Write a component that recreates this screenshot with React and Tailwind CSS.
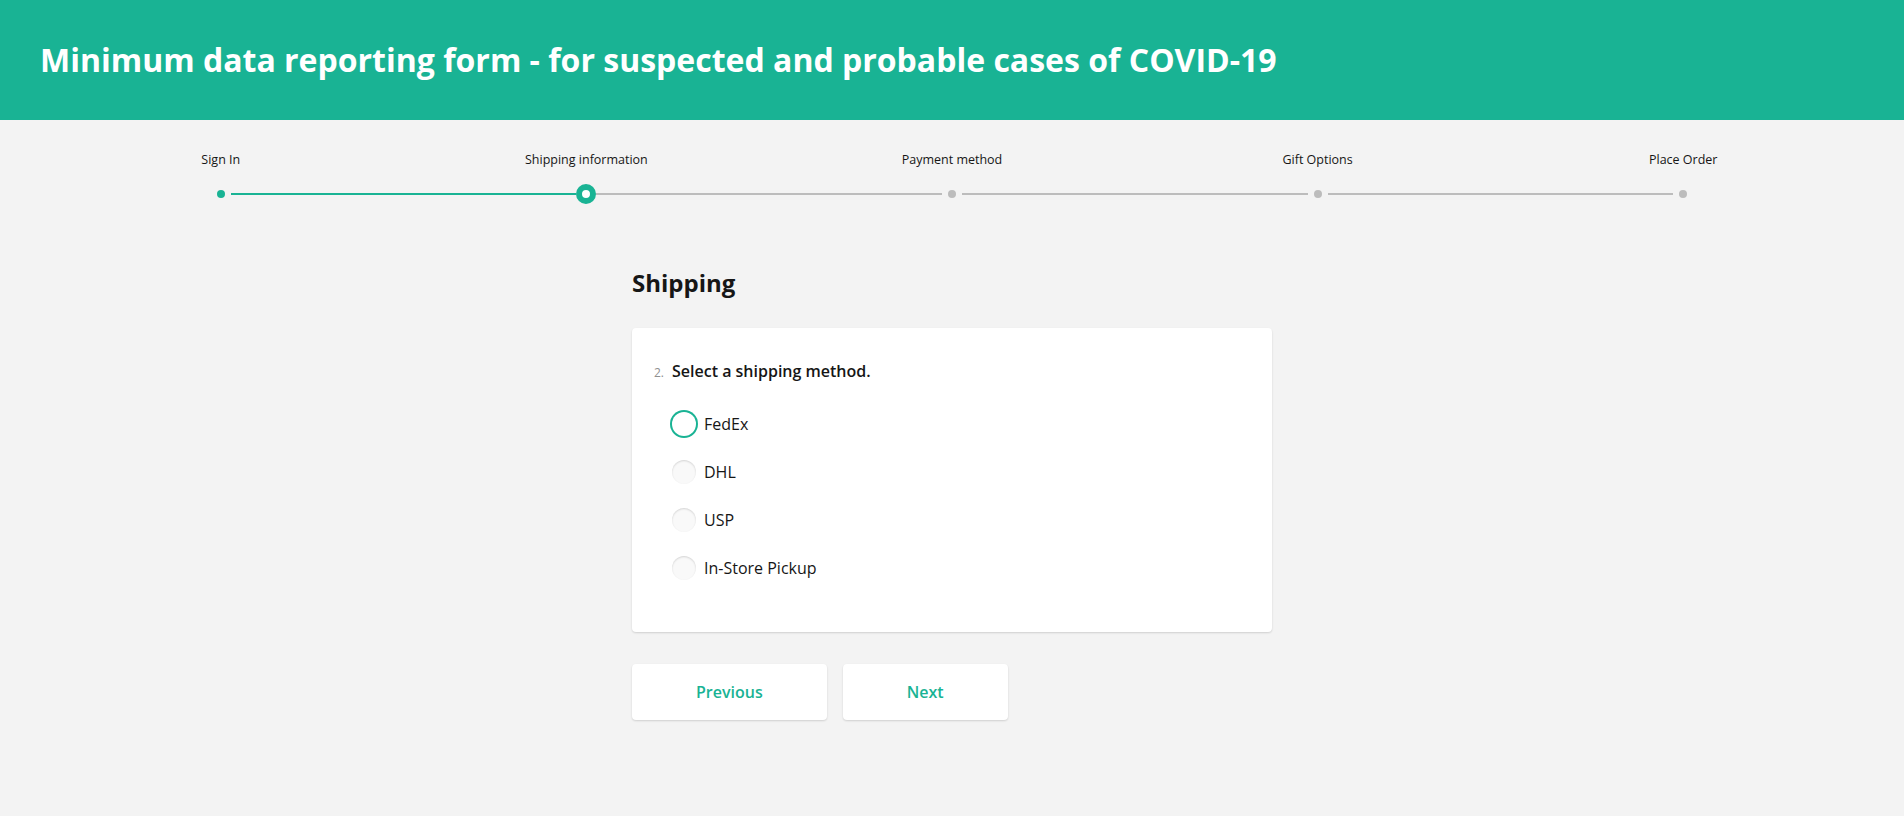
import { useState } from "react";

const STEPS = ["Sign In", "Shipping information", "Payment method", "Gift Options", "Place Order"];
const OPTIONS = ["FedEx", "DHL", "USP", "In-Store Pickup"];

function Step({ label, index, current }) {
    const isFirst = index === 0;
    const isLast = index === STEPS.length - 1;
    const leftColor = isFirst ? "bg-transparent" : index <= current ? "bg-[#19b394]" : "bg-[#bcbcbc]";
    const rightColor = isLast ? "bg-transparent" : index < current ? "bg-[#19b394]" : "bg-[#bcbcbc]";
    const isCurrent = index === current;

    return (
        <div className="flex flex-col items-center">
            <div className="text-[12.5px] leading-4 text-[#161616] whitespace-nowrap">{label}</div>
            <div className="flex items-center w-full h-5 mt-4">
                <div className={`flex-1 h-[2px] ${leftColor} ${isCurrent ? "" : "mr-[6px]"}`} />
                {isCurrent ? (
                    <div className="w-5 h-5 rounded-full border-[6px] border-[#19b394] bg-white" />
                ) : (
                    <div className={`w-2 h-2 rounded-full ${index < current ? "bg-[#19b394]" : "bg-[#bcbcbc]"}`} />
                )}
                <div className={`flex-1 h-[2px] ${rightColor} ${isCurrent ? "" : "ml-[6px]"}`} />
            </div>
        </div>
    );
}

export default function App() {
    const [selected, setSelected] = useState(null);

    return (
        <div className="min-h-[816px] bg-[#f3f3f3] font-['Open_Sans',sans-serif] text-[#161616]">

            {/* HEADER */}
            <div className="h-[120px] bg-[#19b394] flex items-center pl-10">
                <h1 className="text-[32px] leading-10 font-bold text-white">
                    Minimum data reporting form - for suspected and probable cases of COVID-19
                </h1>
            </div>

            {/* PROGRESS */}
            <div className="grid grid-cols-5 px-[38px] pt-8">
                {STEPS.map((s, i) => (
                    <Step key={s} label={s} index={i} current={1} />
                ))}
            </div>

            {/* PAGE */}
            <div className="w-[640px] mx-auto mt-[63px]">

                <h2 className="text-[24px] leading-8 font-bold">Shipping</h2>

                <div className="mt-[29px] bg-white rounded shadow-[0_1px_2px_rgba(0,0,0,0.15)] pl-[22px] pr-10 pt-[31px] pb-10">

                    <div className="flex items-baseline">
                        <span className="w-[18px] text-[12px] text-[#909090]">2.</span>
                        <span className="text-[16px] leading-6 font-semibold">Select a shipping method.</span>
                    </div>

                    <div className="pl-[18px] mt-[17px] flex flex-col">
                        {OPTIONS.map((o, i) => {
                            const focused = selected === null ? i === 0 : selected === o;
                            return (
                                <label key={o} className="h-12 flex items-center gap-2 cursor-pointer" onClick={() => setSelected(o)}>
                                    {focused ? (
                                        <span className="w-6 h-6 rounded-full bg-white shadow-[0_0_0_2px_#19b394]" />
                                    ) : (
                                        <span className="w-6 h-6 rounded-full bg-[#f9f9f9] shadow-[inset_0_1px_2px_rgba(0,0,0,0.15)]" />
                                    )}
                                    <span className="text-[16px] leading-6">{o}</span>
                                </label>
                            );
                        })}
                    </div>

                </div>

                {/* NAV */}
                <div className="flex gap-4 mt-8">
                    <button className="h-14 px-16 bg-white rounded shadow-[0_1px_2px_rgba(0,0,0,0.15)] text-[16px] font-semibold text-[#19b394]">
                        Previous
                    </button>
                    <button className="h-14 px-16 bg-white rounded shadow-[0_1px_2px_rgba(0,0,0,0.15)] text-[16px] font-semibold text-[#19b394]">
                        Next
                    </button>
                </div>

            </div>

        </div>
    );
}
